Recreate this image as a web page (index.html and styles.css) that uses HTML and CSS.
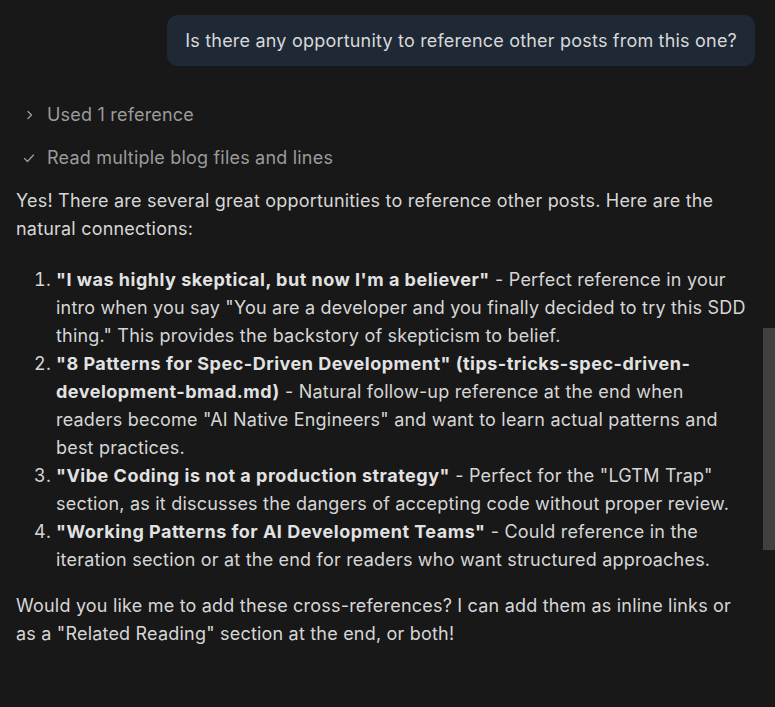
FILE: index.html
```html
<!DOCTYPE html>
<html>
<head>
<meta charset="utf-8">
<link rel="stylesheet" href="styles.css">
</head>
<body>
<div class="view">
  <div class="content">
    <div class="user-row">
      <div class="bubble">Is there any opportunity to reference other posts from this one?</div>
    </div>
    <div class="step">
      <svg class="step-icon" width="12" height="12" viewBox="0 0 12 12"><path d="M5 2.5 L8.5 6 L5 9.5" fill="none" stroke="#a0a0a0" stroke-width="1.2" stroke-linecap="round" stroke-linejoin="round"/></svg>
      <span>Used 1 reference</span>
    </div>
    <div class="step">
      <svg class="step-icon" width="12" height="12" viewBox="0 0 12 12"><path d="M1.5 6.5 L4.5 9.5 L10.5 3" fill="none" stroke="#a0a0a0" stroke-width="1.2" stroke-linecap="round" stroke-linejoin="round"/></svg>
      <span>Read multiple blog files and lines</span>
    </div>
    <p class="para first">Yes! There are several great opportunities to reference other posts. Here are the natural connections:</p>
    <ol class="list">
      <li><b>"I was highly skeptical, but now I'm a believer"</b> - Perfect reference in your intro when you say "You are a developer and you finally decided to try this SDD thing." This provides the backstory of skepticism to belief.</li>
      <li><b>"8 Patterns for Spec-Driven Development" (tips-tricks-spec-driven-development-bmad.md)</b> - Natural follow-up reference at the end when readers become "AI Native Engineers" and want to learn actual patterns and best practices.</li>
      <li><b>"Vibe Coding is not a production strategy"</b> - Perfect for the "LGTM Trap" section, as it discusses the dangers of accepting code without proper review.</li>
      <li><b>"Working Patterns for AI Development Teams"</b> - Could reference in the iteration section or at the end for readers who want structured approaches.</li>
    </ol>
    <p class="para">Would you like me to add these cross-references? I can add them as inline links or as a "Related Reading" section at the end, or both!</p>
  </div>
  <div class="scroll-thumb"></div>
</div>
</body>
</html>
```
FILE: styles.css
```css
html, body {
  margin: 0;
  padding: 0;
  background: #181818;
}
body {
  font-family: Inter, "Noto Sans", sans-serif;
  font-size: 18px;
  line-height: 28px;
  letter-spacing: 0.2px;
  color: #d6d6d6;
  width: 775px;
  height: 707px;
  overflow: hidden;
}
.view {
  position: relative;
  height: 707px;
}
.content {
  padding: 15px 28px 0 16px;
}
.user-row {
  display: flex;
  justify-content: flex-end;
  margin-right: -8px;
}
.bubble {
  background: #1f2936;
  border-radius: 11px;
  padding: 12px 18px 11px 18px;
  color: #d8d8d8;
}
.step {
  display: flex;
  align-items: center;
  gap: 12px;
  color: #9b9b9b;
  height: 43px;
  padding-left: 7px;
}
.user-row + .step {
  margin-top: 27px;
}
.step-icon {
  flex: none;
}
.para {
  margin: 0;
}
.para.first {
  margin-top: 8px;
}
.list {
  margin: 23px 0 18px 0;
  padding-left: 40px;
}
.list b {
  font-weight: 700;
  letter-spacing: 0.5px;
  color: #e2e2e2;
}
.scroll-thumb {
  position: absolute;
  right: 0;
  top: 328px;
  width: 12px;
  height: 222px;
  background: #404040;
}
```
